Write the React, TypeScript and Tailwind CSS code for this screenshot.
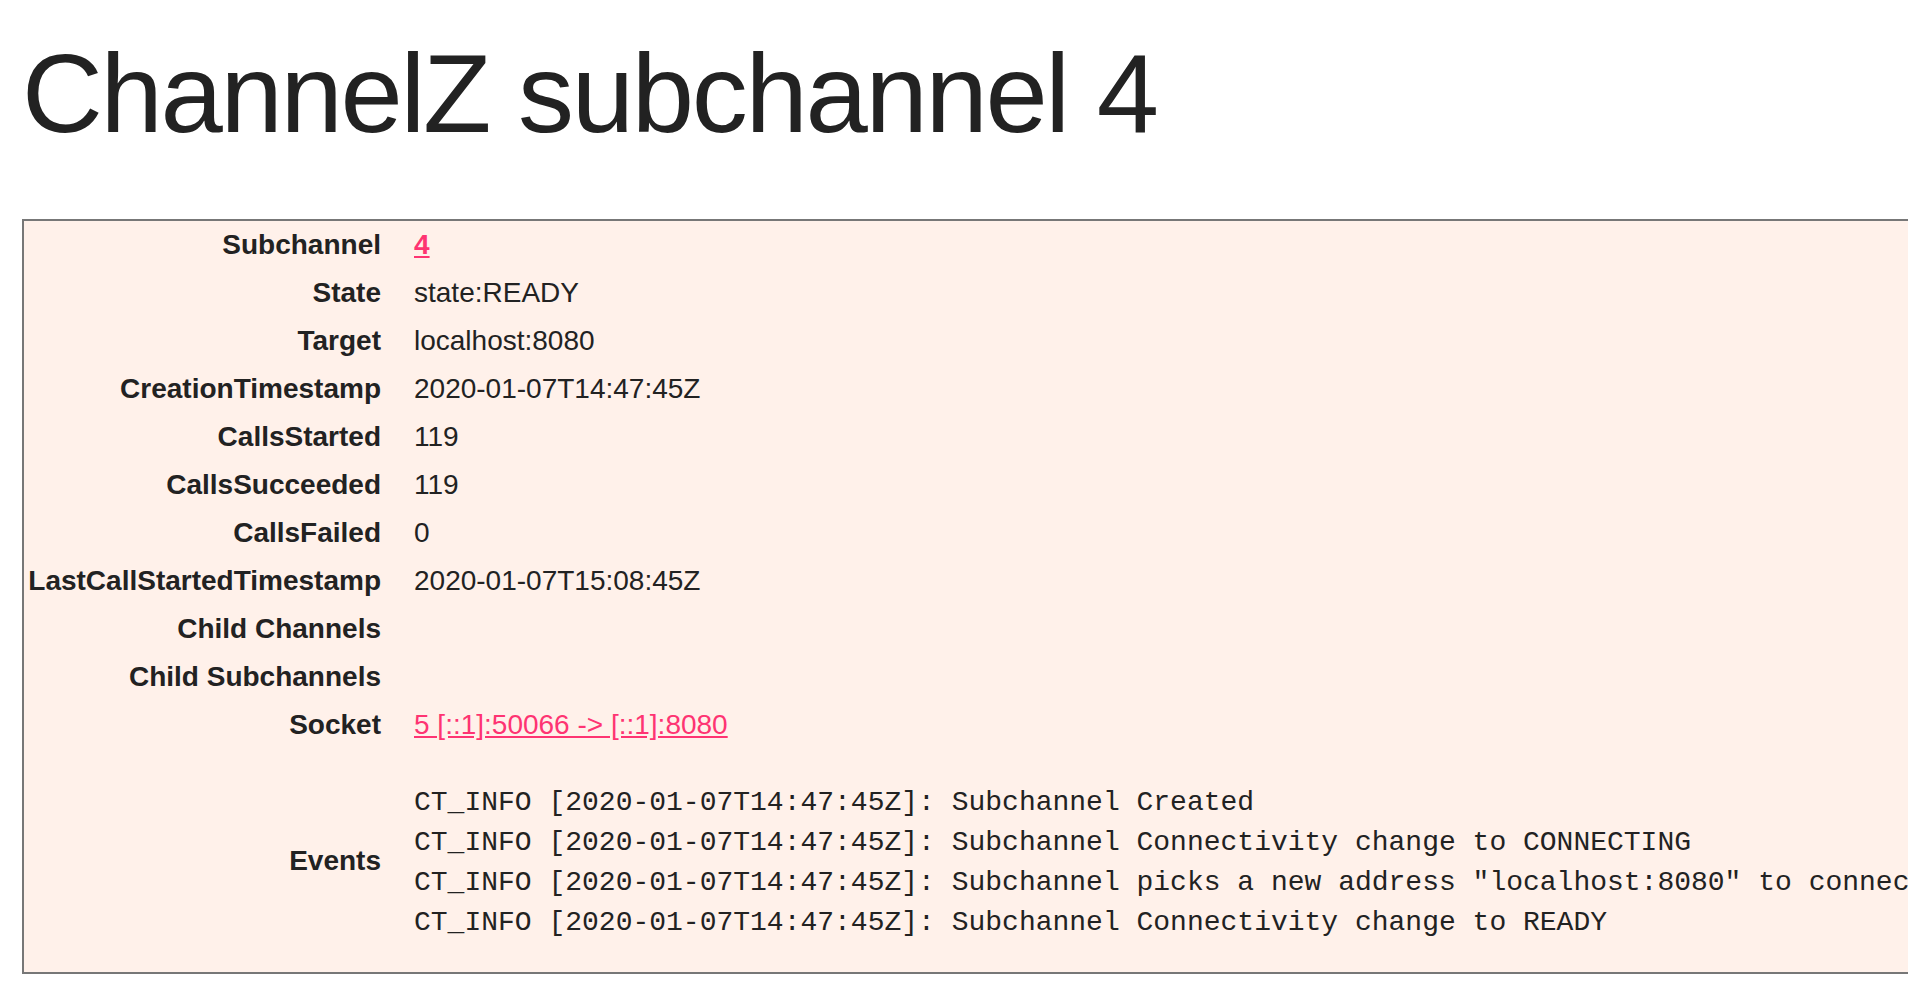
const rows: { label: string; value?: string; link?: boolean; bold?: boolean }[] = [
  { label: "Subchannel", value: "4", link: true, bold: true },
  { label: "State", value: "state:READY" },
  { label: "Target", value: "localhost:8080" },
  { label: "CreationTimestamp", value: "2020-01-07T14:47:45Z" },
  { label: "CallsStarted", value: "119" },
  { label: "CallsSucceeded", value: "119" },
  { label: "CallsFailed", value: "0" },
  { label: "LastCallStartedTimestamp", value: "2020-01-07T15:08:45Z" },
  { label: "Child Channels" },
  { label: "Child Subchannels" },
  { label: "Socket", value: "5 [::1]:50066 -> [::1]:8080", link: true },
];

const events = [
  "CT_INFO [2020-01-07T14:47:45Z]: Subchannel Created",
  "CT_INFO [2020-01-07T14:47:45Z]: Subchannel Connectivity change to CONNECTING",
  'CT_INFO [2020-01-07T14:47:45Z]: Subchannel picks a new address "localhost:8080" to connect',
  "CT_INFO [2020-01-07T14:47:45Z]: Subchannel Connectivity change to READY",
];

export default function App() {
  return (
    <div className="min-h-screen w-full overflow-hidden bg-white px-[22px] text-[#222] font-['Liberation_Sans',Arial,sans-serif]">
      {/* title */}
      <h1 className="mt-[38px] text-[112px] leading-none font-normal tracking-[-2.3px]">
        ChannelZ subchannel 4
      </h1>

      {/* details table */}
      <div className="mt-[69px] w-max border-2 border-[#777] bg-[#fff1ea]">
        {rows.map((r) => (
          <div key={r.label} className="flex h-[48px] items-center text-[28px] leading-[48px]">
            <div className="w-[373px] shrink-0 pr-4 text-right font-bold">{r.label}</div>
            <div className="pl-[17px]">
              {r.link ? (
                <a href="#" className={r.bold ? "font-bold text-[#fe3472] underline" : "text-[#fe3472] underline"}>
                  {r.value}
                </a>
              ) : (
                r.value
              )}
            </div>
          </div>
        ))}
        <div className="flex items-center py-1 text-[28px]">
          <div className="w-[373px] shrink-0 pr-4 text-right font-bold leading-[48px]">Events</div>
          <pre className="mt-[30px] mb-[25px] pl-[17px] font-['Liberation_Mono','Courier_New',monospace] text-[28px] leading-[40px]">
            {events.join("\n")}
          </pre>
        </div>
      </div>
    </div>
  );
}
